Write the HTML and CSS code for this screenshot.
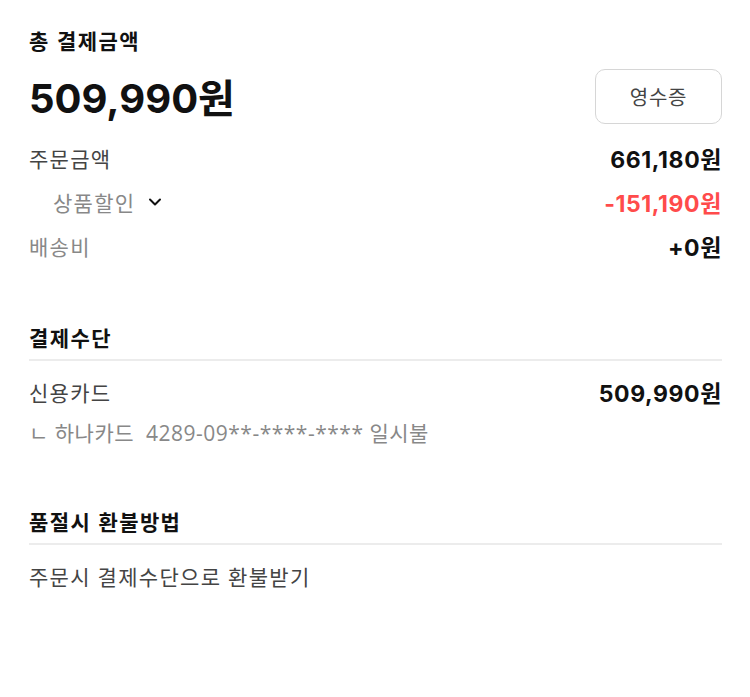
FILE: index.html
```html
<!DOCTYPE html>
<html lang="ko">
<head>
  <meta charset="UTF-8" />
  <meta name="viewport" content="width=device-width, initial-scale=1.0"/>
  <title>결제정보</title>
  <link rel="stylesheet" href="styles.css">
</head>
<body>

<div class="summary">
  <h3 class="title">총 결제금액</h3>
  <div class="total-row">
    <span class="total">509,990원</span>
    <button class="receipt">영수증</button>
  </div>
  <div class="row">
    <span class="label dark">주문금액</span>
    <span class="value">661,180원</span>
  </div>
  <div class="row">
    <span class="label sub">상품할인
      <svg class="chevron" width="16" height="16" viewBox="0 0 16 16"><path d="M3 5.5l5 5 5-5" fill="none" stroke="#111" stroke-width="2" stroke-linecap="round" stroke-linejoin="round"/></svg>
    </span>
    <span class="value red">-151,190원</span>
  </div>
  <div class="row">
    <span class="label">배송비</span>
    <span class="value">+0원</span>
  </div>
</div>

<div class="section">
  <h3 class="section-title">결제수단</h3>
  <div class="section-body">
    <div class="line">
      <span class="label dark">신용카드</span>
      <span class="value">509,990원</span>
    </div>
    <div class="line">
      <span class="label card">ㄴ 하나카드&nbsp; 4289-09**-****-**** 일시불</span>
    </div>
  </div>
</div>

<div class="section">
  <h3 class="section-title">품절시 환불방법</h3>
  <div class="section-body">
    <div class="line">
      <span class="label dark">주문시 결제수단으로 환불받기</span>
    </div>
  </div>
</div>

</body>
</html>
```

FILE: styles.css
```css
body {
  font-family: Inter, "Noto Sans CJK KR", sans-serif;
  margin: 0;
  padding: 26px 28px 0 29px;
  background: #fff;
  color: #111;
}

h3 {
  margin: 0;
}

.title,
.section-title {
  font-family: "Noto Sans CJK KR", sans-serif;
  font-size: 21px;
  font-weight: 700;
  line-height: 28px;
  letter-spacing: 1.4px;
}

.total-row {
  display: flex;
  justify-content: space-between;
  align-items: center;
  height: 56px;
  margin-top: 14px;
  margin-bottom: 12px;
}

.total {
  font-size: 40px;
  font-weight: 700;
}

.receipt {
  width: 127px;
  height: 55px;
  border: 1.5px solid #d6d6d6;
  border-radius: 10px;
  background: #fff;
  font-family: "Noto Sans CJK KR", sans-serif;
  font-size: 20px;
  letter-spacing: 0.8px;
  color: #444;
  cursor: pointer;
}

.row,
.line {
  display: flex;
  justify-content: space-between;
  align-items: center;
  height: 44px;
}

.line {
  height: 40px;
}

.label {
  font-family: "Open Sans", "Noto Sans CJK KR", sans-serif;
  font-size: 21px;
  letter-spacing: 1.3px;
  color: #888;
  display: flex;
  align-items: center;
}

.label.dark {
  color: #444;
}

.label.card {
  letter-spacing: 0.5px;
}

.label.sub {
  padding-left: 24px;
}

.chevron {
  margin-left: 12px;
}

.value {
  font-size: 23px;
  font-weight: 700;
  letter-spacing: 0.6px;
}

.value.red {
  color: #ff4b4b;
}

.section {
  margin-top: 55px;
}

.section-title {
  padding-bottom: 8px;
  border-bottom: 2px solid #ececec;
}

.section-body {
  padding-top: 11px;
}
```
